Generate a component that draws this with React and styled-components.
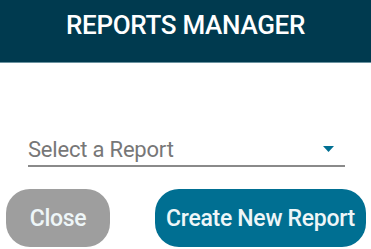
import React from "react";
import styled, { createGlobalStyle } from "styled-components";

const Global = createGlobalStyle`
  html, body { margin: 0; padding: 0; background: #fff; }
  body { font-family: Roboto, "Noto Sans", sans-serif; overflow: hidden; }
`;

const Dialog = styled.div`
  width: 371px;
  height: 249px;
  display: flex;
  flex-direction: column;
  background: #fff;
`;

const Header = styled.header`
  height: 62px;
  background: #003a4f;
  border-bottom: 1px solid #6b93a0;
  display: flex;
  align-items: flex-start;
  justify-content: center;
  box-sizing: content-box;
`;

const Title = styled.h1`
  margin: 0;
  padding-top: 10px;
  color: #fff;
  font-size: 26px;
  line-height: 30px;
  font-weight: 500;
  letter-spacing: -0.3px;
`;

const Body = styled.div`
  padding: 70px 26px 0 28px;
`;

const SelectField = styled.div`
  display: flex;
  align-items: center;
  justify-content: space-between;
  height: 32px;
  border-bottom: 2px solid #8a8a8a;
  padding-right: 11px;
`;

const Placeholder = styled.span`
  color: #777;
  font-size: 22px;
  font-weight: 400;
  letter-spacing: -0.2px;
`;

const Actions = styled.div`
  display: flex;
  gap: 45px;
  padding: 22px 5px 0 6px;
`;

const Button = styled.button`
  flex-shrink: 0;
  height: 58px;
  border: none;
  border-radius: 24px;
  background: ${(p) => (p.$primary ? "#006f92" : "#9e9e9e")};
  color: #eef6f8;
  font-family: Roboto, sans-serif;
  font-size: 23px;
  font-weight: 500;
  width: ${(p) => p.$w}px;
  padding: 0;
  letter-spacing: -0.3px;
`;

export default function App() {
  return (
    <>
      <Global />
      <Dialog>
        <Header>
          <Title>REPORTS MANAGER</Title>
        </Header>
        <Body>
          <SelectField>
            <Placeholder>Select a Report</Placeholder>
            <svg width="11" height="6" viewBox="0 0 11 6">
              <path d="M0 0 L11 0 L5.5 6 Z" fill="#006f92" />
            </svg>
          </SelectField>
        </Body>
        <Actions>
          <Button $w={104}>Close</Button>
          <Button $primary $w={211}>Create New Report</Button>
        </Actions>
      </Dialog>
    </>
  );
}
